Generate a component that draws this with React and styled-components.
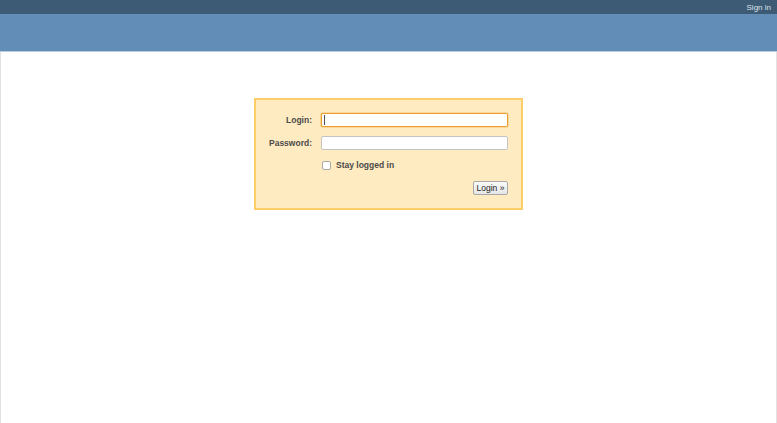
import React from 'react';
import styled, { createGlobalStyle } from 'styled-components';

const GlobalStyle = createGlobalStyle`
  html, body {
    margin: 0;
    padding: 0;
    height: 100%;
    background: #fff;
    font-family: "Liberation Sans", Arial, sans-serif;
  }
  #root {
    height: 100%;
  }
`;

const Page = styled.div`
  display: flex;
  flex-direction: column;
  height: 100%;
`;

const TopMenu = styled.div`
  height: 14px;
  background: #3e5b76;
  display: flex;
  justify-content: flex-end;
  align-items: center;
  padding: 0 6px;
  font-size: 8px;
  color: #dde3ea;
`;

const Header = styled.div`
  height: 37px;
  background: #628db6;
  border-bottom: 1px solid #b8cde0;
`;

const Main = styled.div`
  flex: 1;
  background: #fff;
  border-left: 1px solid #e2e2e2;
  border-right: 1px solid #e2e2e2;
  display: flex;
  justify-content: center;
  align-items: flex-start;
  padding-top: 46px;
`;

const LoginBox = styled.form`
  width: 239px;
  padding: 13px 13px 13px 13px;
  background: #ffebc1;
  border: 2px solid #fdcd68;
  display: grid;
  grid-template-columns: 43px 187px;
  column-gap: 9px;
  row-gap: 9px;
  align-items: center;
`;

const Label = styled.label`
  text-align: right;
  font-size: 8.5px;
  font-weight: bold;
  color: #4a4a4a;
  white-space: nowrap;
`;

const Field = styled.div`
  position: relative;
  height: 14px;
`;

const Input = styled.input`
  display: block;
  box-sizing: border-box;
  width: 100%;
  height: 14px;
  margin: 0;
  padding: 0 2px;
  background: #fff;
  border: 1px solid ${({ $focused }) => ($focused ? '#eba035' : '#c4c4c4')};
  border-radius: 2px;
  box-shadow: ${({ $focused }) => ($focused ? '0 0 0 0.6px #f4c472' : 'none')};
  outline: none;
`;

const Caret = styled.span`
  position: absolute;
  left: 3px;
  top: 2px;
  width: 1px;
  height: 10px;
  background: #555;
`;

const CheckRow = styled.div`
  grid-column: 2;
  display: flex;
  align-items: center;
  gap: 5px;
  padding-left: 1px;
  margin-top: 1px;
  font-size: 8.5px;
  font-weight: bold;
  color: #4a4a4a;
`;

const Box = styled.span`
  box-sizing: border-box;
  width: 9px;
  height: 9px;
  background: #fff;
  border: 1px solid #a9a9a9;
  border-radius: 2px;
`;

const Actions = styled.div`
  grid-column: 2;
  display: flex;
  justify-content: flex-end;
  margin-top: 2px;
`;

const Button = styled.button`
  box-sizing: border-box;
  height: 14px;
  width: 35px;
  padding: 0;
  font-family: "Liberation Sans", Arial, sans-serif;
  font-size: 8.5px;
  color: #222;
  background: linear-gradient(#fafafa, #e6e6e6);
  border: 1px solid #a8a8a8;
  border-radius: 2px;
  line-height: 12px;
`;

export default function App() {
  return (
    <>
      <GlobalStyle />
      <Page>
        <TopMenu>Sign in</TopMenu>
        <Header />
        <Main>
          <LoginBox onSubmit={(e) => e.preventDefault()}>
            <Label htmlFor='username'>Login:</Label>
            <Field>
              <Input id='username' type='text' $focused />
              <Caret />
            </Field>
            <Label htmlFor='password'>Password:</Label>
            <Field>
              <Input id='password' type='password' />
            </Field>
            <CheckRow>
              <Box />
              Stay logged in
            </CheckRow>
            <Actions>
              <Button type='submit'>Login »</Button>
            </Actions>
          </LoginBox>
        </Main>
      </Page>
    </>
  );
}
